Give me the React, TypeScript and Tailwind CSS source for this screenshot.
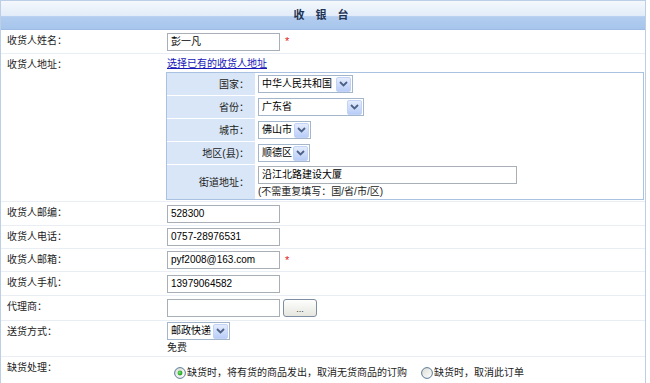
import React from "react";

const FONT = { fontFamily: '"Liberation Sans", "Noto Sans CJK SC", sans-serif' };

function Arrow() {
  return (
    <span className="flex h-[15px] w-[15px] shrink-0 items-center justify-center rounded-[2px] border border-[#c3d3f6] bg-gradient-to-b from-[#e4ecfd] to-[#b9cdf7]">
      <svg width="9" height="6" viewBox="0 0 9 6">
        <path d="M1 1 L4.5 4.5 L8 1" fill="none" stroke="#4d6185" strokeWidth="1.8" />
      </svg>
    </span>
  );
}

function Select({ text, w }: { text: string; w: string }) {
  return (
    <div className={`flex h-[18px] items-center justify-between border border-[#a4b6cc] bg-white pl-[3px] pr-px ${w}`}>
      <span className="leading-[14px] text-black">{text}</span>
      <Arrow />
    </div>
  );
}

function Input({ value, w = "w-[113px]" }: { value?: string; w?: string }) {
  return (
    <div className={`flex h-[18px] items-center border border-[#a9afb6] bg-white pl-[3px] ${w}`}>
      <span className="leading-[14px] text-black">{value}</span>
    </div>
  );
}

function Star() {
  return <span className="ml-[5px] text-[11px] leading-[13px] text-[#e02020]">*</span>;
}

function Radio({ checked }: { checked?: boolean }) {
  return (
    <svg width="12" height="12" viewBox="0 0 12 12" className="shrink-0">
      <defs>
        <linearGradient id="rb" x1="0" y1="0" x2="1" y2="1">
          <stop offset="0" stopColor="#dcdcd5" />
          <stop offset="1" stopColor="#ffffff" />
        </linearGradient>
        <radialGradient id="rd" cx="0.4" cy="0.4" r="0.6">
          <stop offset="0" stopColor="#6fe46f" />
          <stop offset="1" stopColor="#1a9a1a" />
        </radialGradient>
      </defs>
      <circle cx="6" cy="6" r="5.4" fill="url(#rb)" stroke="#5a7a9a" strokeWidth="1" />
      {checked && <circle cx="6" cy="6" r="2.4" fill="url(#rd)" />}
    </svg>
  );
}

function Row({
  label,
  children,
  h,
  valueClass = "items-center",
}: {
  label: string;
  children: React.ReactNode;
  h: string;
  valueClass?: string;
}) {
  return (
    <div className={`grid grid-cols-[163px_1fr] border-b border-[#e9eef5] ${h}`}>
      <div className="pl-[6px] pt-[4px] leading-[13px] text-[#222]">{label}</div>
      <div className={`flex pl-[3px] ${valueClass}`}>{children}</div>
    </div>
  );
}

function InnerLabel({ children, h }: { children: React.ReactNode; h: string }) {
  return (
    <div className={`flex items-center justify-end bg-[#d8e6f7] pr-[6px] text-[#222] ${h}`}>{children}</div>
  );
}

function InnerValue({ children, h }: { children: React.ReactNode; h: string }) {
  return <div className={`flex items-center bg-white pl-[2px] ${h}`}>{children}</div>;
}

export default function App() {
  return (
    <div className="h-[383px] w-[650px] overflow-hidden bg-white" style={FONT}>
      <div className="w-[646px] border border-[#bccfe6] text-[10px]">
        <div className="flex h-[29px] items-center justify-center border-b border-[#9dbbe3] bg-[linear-gradient(to_bottom,#f4f8fc_0%,#e2ecf8_52%,#b2cdef_56%,#a7c5ec_100%)]">
          <span className="pt-[1px] text-[11px] font-bold tracking-[4px] text-[#1f3354]">收 银 台</span>
        </div>

        <Row label="收货人姓名：" h="h-[24px]">
          <Input value="彭一凡" />
          <Star />
        </Row>

        <div className="grid grid-cols-[163px_1fr] border-b border-[#e9eef5]">
          <div className="pl-[6px] pt-[4px] leading-[13px] text-[#222]">收货人地址：</div>
          <div className="pl-[2px] pr-[1px] pb-[1px] pt-[3px]">
            <a className="ml-px block leading-[14px] text-[#1616b8] underline" href="#">
              选择已有的收货人地址
            </a>
            <div className="mt-px grid grid-cols-[88px_1fr] gap-px border border-[#a9c2e2] bg-white">
              <InnerLabel h="h-[22px]">国家：</InnerLabel>
              <InnerValue h="h-[22px]">
                <Select text="中华人民共和国" w="w-[95px]" />
              </InnerValue>
              <InnerLabel h="h-[22px]">省份：</InnerLabel>
              <InnerValue h="h-[22px]">
                <Select text="广东省" w="w-[106px]" />
              </InnerValue>
              <InnerLabel h="h-[22px]">城市：</InnerLabel>
              <InnerValue h="h-[22px]">
                <Select text="佛山市" w="w-[53px]" />
              </InnerValue>
              <InnerLabel h="h-[22px]">地区(县)：</InnerLabel>
              <InnerValue h="h-[22px]">
                <Select text="顺德区" w="w-[52px]" />
              </InnerValue>
              <InnerLabel h="h-[34px]">街道地址：</InnerLabel>
              <div className="flex h-[34px] flex-col justify-center bg-white pl-[2px]">
                <Input value="沿江北路建设大厦" w="w-[259px]" />
                <span className="mt-px leading-[13px] text-[#222]">(不需重复填写：国/省/市/区)</span>
              </div>
            </div>
          </div>
        </div>

        <Row label="收货人邮编：" h="h-[24px]">
          <Input value="528300" />
        </Row>
        <Row label="收货人电话：" h="h-[23px]">
          <Input value="0757-28976531" />
        </Row>
        <Row label="收货人邮箱：" h="h-[23px]">
          <Input value="pyf2008@163.com" />
          <Star />
        </Row>
        <Row label="收货人手机：" h="h-[24px]">
          <Input value="13979064582" />
        </Row>
        <Row label="代理商：" h="h-[25px]">
          <Input />
          <button className="ml-[3px] flex h-[18px] w-[34px] items-end justify-center rounded-[3px] border border-[#7d8ea2] bg-gradient-to-b from-[#fefefe] to-[#e6e6df] pb-[2px] text-[9px] leading-[9px] text-[#333]">
            ...
          </button>
        </Row>
        <Row label="送货方式：" h="h-[36px]" valueClass="flex-col items-start pt-px">
          <Select text="邮政快递" w="w-[63px]" />
          <span className="mt-px leading-[13px] text-[#222]">免费</span>
        </Row>
        <Row label="缺货处理：" h="h-[30px]" valueClass="items-start pt-[9px] pl-[10px]">
          <div className="flex items-center gap-px leading-[13px] text-[#222]">
            <Radio checked />
            <span>缺货时，将有货的商品发出，取消无货商品的订购</span>
            <span className="ml-[12px]" />
            <Radio />
            <span>缺货时，取消此订单</span>
          </div>
        </Row>
      </div>
    </div>
  );
}
